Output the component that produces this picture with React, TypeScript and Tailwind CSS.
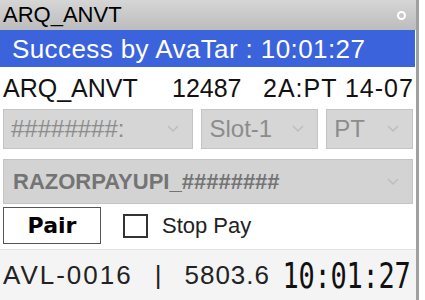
import React from 'react';

const Chevron: React.FC = () => (
  <svg width="14" height="10" viewBox="0 0 14 10" className="shrink-0">
    <path d="M2 2l5 5 5-5" fill="none" stroke="#bdbdbd" strokeWidth="1.5" />
  </svg>
);

interface DropProps {
  label: string;
  width: string;
}

const Drop: React.FC<DropProps> = ({ label, width }) => (
  <div className={`${width} h-[40px] flex items-center justify-between bg-[#d6d6d6] border border-[#c4c4c4] pl-[7px] pr-[12px]`}>
    <span className="text-[24px] text-[#8c8c8c] leading-[30px] whitespace-nowrap">{label}</span>
    <Chevron />
  </div>
);

const App: React.FC = () => {
  return (
    <div className="w-[425px] h-[300px] flex bg-white overflow-hidden" style={{ fontFamily: '"Liberation Sans", Arial, sans-serif' }}>
      <div className="w-[419px] h-full flex flex-col border-r-[3px] border-[#a0a0a0]">
        {/* title bar */}
        <div className="h-[30px] flex items-center justify-between bg-gradient-to-b from-[#d6d6d6] to-[#bcbcbc] pl-[3px] pr-[10px]">
          <span className="text-[22px] leading-none text-black">ARQ_ANVT</span>
          <span className="w-[9px] h-[9px] rounded-full border-2 border-white" />
        </div>

        {/* status */}
        <div className="h-[37px] flex items-center bg-[#3b63dc] pl-[12px] mr-[1px]">
          <span className="text-[26px] leading-none text-white whitespace-nowrap tracking-[0.4px]">Success by AvaTar : 10:01:27</span>
        </div>

        {/* info row */}
        <div className="h-[42px] flex items-center pl-[3px] text-[25px] leading-none text-[#111] whitespace-nowrap">
          <span className="w-[169px]">ARQ_ANVT</span>
          <span className="w-[91px]">12487</span>
          <span className="tracking-[1px]">2A:PT 14-07</span>
        </div>

        {/* selects */}
        <div className="flex gap-[8px] px-[3px]">
          <Drop label="########:" width="w-[191px]" />
          <Drop label="Slot-1" width="w-[117px]" />
          <Drop label="PT" width="w-[87px]" />
        </div>

        <div className="mt-[10px] mx-[3px] h-[45px] flex items-center justify-between bg-[#d3d3d3] border border-[#c4c4c4] pl-[9px] pr-[12px]">
          <span className="text-[22px] font-bold text-[#747474] leading-none">RAZORPAYUPI_########</span>
          <Chevron />
        </div>

        {/* pair row */}
        <div className="mt-[3px] flex items-center px-[3px]">
          <div className="w-[98px] h-[37px] flex items-center justify-center bg-white border border-[#555]">
            <span className="text-[22px] font-bold text-black leading-none" style={{ fontFamily: '"DejaVu Sans", sans-serif' }}>Pair</span>
          </div>
          <div className="ml-[22px] w-[25px] h-[24px] border-2 border-[#333] bg-white" />
          <span className="ml-[14px] text-[22px] text-[#222] leading-none">Stop Pay</span>
        </div>

        {/* bottom bar */}
        <div className="mt-[5px] flex-1 flex items-center bg-[#f4f4f4] border-t border-[#e2e2e2] pl-[3px] whitespace-nowrap">
          <span className="text-[26px] text-[#222] leading-none tracking-[2px]">AVL-0016</span>
          <span className="ml-[22px] text-[26px] text-[#222] leading-none">|</span>
          <span className="ml-[23px] w-[98px] overflow-hidden text-[26px] text-[#222] leading-[30px] tracking-[1px]">5803.6</span>
          <span
            className="text-[27px] leading-none text-[#111] tracking-[-0.25px] scale-y-[1.3] inline-block"
            style={{ fontFamily: '"DejaVu Sans Mono", "Liberation Mono", monospace' }}
          >
            10:01:27
          </span>
        </div>
      </div>
      <div className="flex-1 bg-white" />
    </div>
  );
};

export default App;
